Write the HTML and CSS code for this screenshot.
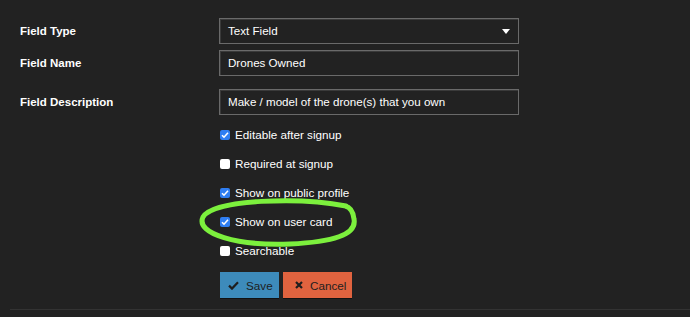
FILE: index.html
```html
<!DOCTYPE html>
<html>
<head>
<meta charset="utf-8">
<link rel="stylesheet" href="styles.css">
</head>
<body>
<div class="page">
  <form class="form">
    <div class="row row-type">
      <label class="lbl">Field Type</label>
      <div class="ctrl select">
        <span>Text Field</span>
        <svg class="caret" width="8" height="5" viewBox="0 0 8 5"><path d="M0 0h8L4 5z" fill="#fff"/></svg>
      </div>
    </div>
    <div class="row row-name">
      <label class="lbl">Field Name</label>
      <div class="ctrl">Drones Owned</div>
    </div>
    <div class="row row-desc">
      <label class="lbl">Field Description</label>
      <div class="ctrl">Make / model of the drone(s) that you own</div>
    </div>
    <div class="checks">
      <div class="check"><span class="box on"><svg viewBox="0 0 10 10" width="10" height="10"><path d="M2 5.2l2 2L8 2.8" fill="none" stroke="#fff" stroke-width="1.6"/></svg></span>Editable after signup</div>
      <div class="check"><span class="box"></span>Required at signup</div>
      <div class="check"><span class="box on"><svg viewBox="0 0 10 10" width="10" height="10"><path d="M2 5.2l2 2L8 2.8" fill="none" stroke="#fff" stroke-width="1.6"/></svg></span>Show on public profile</div>
      <div class="check"><span class="box on"><svg viewBox="0 0 10 10" width="10" height="10"><path d="M2 5.2l2 2L8 2.8" fill="none" stroke="#fff" stroke-width="1.6"/></svg></span>Show on user card</div>
      <div class="check"><span class="box"></span>Searchable</div>
    </div>
    <div class="buttons">
      <button type="button" class="btn save"><svg class="ico" width="11" height="9" viewBox="0 0 11 9"><path d="M1 4.6l3 3L10 1.3" fill="none" stroke="#1e1e1e" stroke-width="2.2"/></svg>Save</button>
      <button type="button" class="btn cancel"><svg class="ico" width="8" height="8" viewBox="0 0 8 8"><path d="M1 1l6 6M7 1L1 7" fill="none" stroke="#1e1e1e" stroke-width="2.2"/></svg>Cancel</button>
    </div>
  </form>
  <div class="rule"></div>
  <svg class="scribble" width="690" height="317" viewBox="0 0 690 317">
    <path d="M346 206 C 300 197, 214 199, 203 217 C 195 234, 238 246, 290 244 C 332 242, 357 235, 354 219 C 353 211, 350 207, 345 206" fill="none" stroke="#7cf03d" stroke-width="5" stroke-linecap="round"/>
  </svg>
</div>
</body>
</html>
```

FILE: styles.css
```css
html, body {
  margin: 0;
  padding: 0;
  background: #222222;
}
body {
  width: 690px;
  height: 317px;
  overflow: hidden;
  font-family: "Liberation Sans", Arial, Helvetica, sans-serif;
  color: #ffffff;
}
.page {
  position: relative;
  width: 690px;
  height: 317px;
}
.form {
  padding: 18px 0 0 20px;
}
.row {
  display: flex;
  align-items: center;
}
.row-name { margin-top: 6px; }
.row-desc { margin-top: 13px; }
.lbl {
  width: 199px;
  font-size: 11.5px;
  font-weight: bold;
}
.ctrl {
  box-sizing: border-box;
  width: 300px;
  height: 26px;
  border: 1px solid #6a6a6a;
  box-shadow: inset 1px 1px 0 #3a3a3a;
  background: #222;
  padding: 0 8px;
  font-size: 11.6px;
  line-height: 24px;
  display: flex;
  align-items: center;
}
.select {
  justify-content: space-between;
}
.caret {
  margin-top: 1px;
}
.checks {
  margin: 5px 0 0 200px;
  display: flex;
  flex-direction: column;
}
.check {
  height: 29px;
  display: flex;
  align-items: center;
  font-size: 11.7px;
}
.box {
  box-sizing: border-box;
  width: 10px;
  height: 10px;
  border-radius: 2px;
  background: #fff;
  margin-right: 5px;
  display: flex;
  align-items: center;
  justify-content: center;
  flex-shrink: 0;
}
.box.on {
  background: #2f7ef2;
}
.buttons {
  margin: 7px 0 0 200px;
  display: flex;
  gap: 4px;
}
.btn {
  height: 26px;
  border: none;
  box-shadow: 0 1px 0 #111;
  font-family: "Liberation Sans", Arial, sans-serif;
  font-size: 11.7px;
  color: #1e1e1e;
  display: flex;
  align-items: center;
  padding: 0;
  cursor: pointer;
}
.ico {
  flex-shrink: 0;
}
.save {
  width: 59px;
  background: #3d8bbb;
  padding-left: 8px;
  gap: 7px;
}
.cancel {
  width: 69px;
  background: #e0633f;
  padding-left: 12px;
  gap: 7px;
}
.rule {
  margin: 11px 0 0 10px;
  height: 1px;
  background: #333333;
}
.scribble {
  position: absolute;
  left: 0;
  top: 0;
  pointer-events: none;
}
```
